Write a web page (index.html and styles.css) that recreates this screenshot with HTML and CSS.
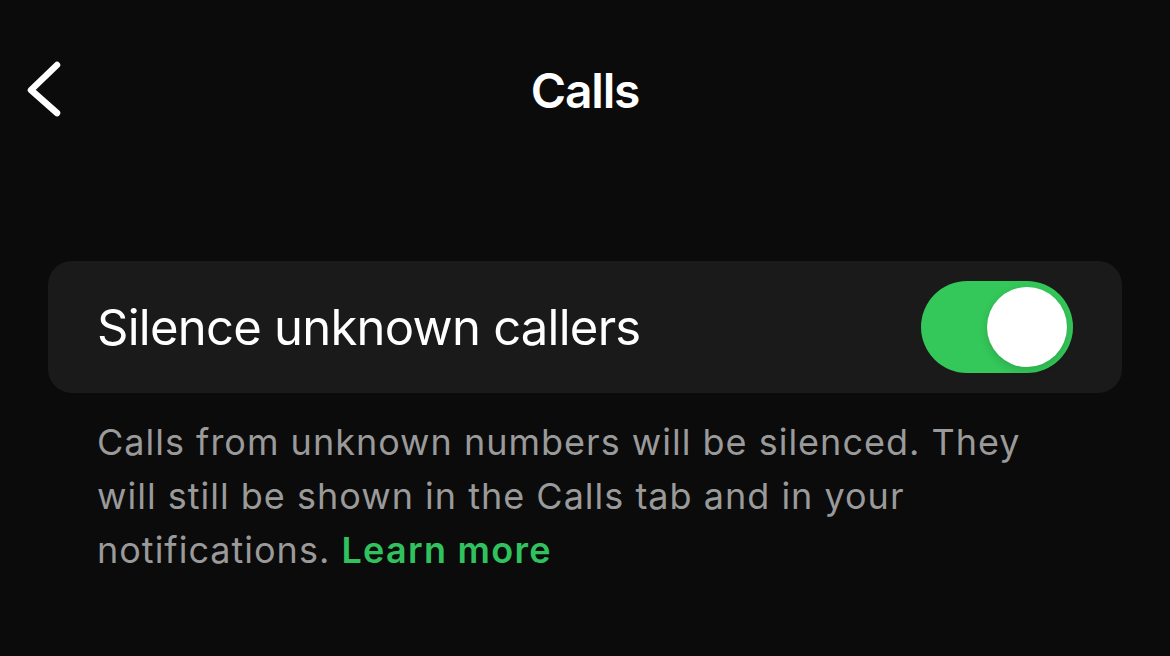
FILE: index.html
```html
<!DOCTYPE html>
<html lang="en">
<head>
<meta charset="utf-8">
<title>Calls</title>
<link rel="stylesheet" href="styles.css">
</head>
<body>
  <header class="nav">
    <button class="nav-back" aria-label="Back">
      <svg width="50" height="70" viewBox="0 0 50 70">
        <path d="M32 10 L6 35 L32 58" fill="none" stroke="#fff" stroke-width="6.5" stroke-linecap="round" stroke-linejoin="round"/>
      </svg>
    </button>
    <h1 class="nav-title">Calls</h1>
  </header>
  <main class="content">
    <section class="group">
      <div class="row">
        <span class="row-label">Silence unknown callers</span>
        <span class="switch is-on" role="switch" aria-checked="true"><span class="switch-knob"></span></span>
      </div>
    </section>
    <p class="footnote">Calls from unknown numbers will be silenced. They will still be shown in the Calls tab and in your notifications. <a class="footnote-link" href="#">Learn more</a></p>
  </main>
</body>
</html>
```
FILE: styles.css
```css
* { box-sizing: border-box; }

html, body {
  margin: 0;
  padding: 0;
  background: #0b0b0b;
  height: 100%;
}

body {
  font-family: Inter, "Noto Sans", sans-serif;
  color: #fff;
}

.nav {
  position: relative;
  height: 180px;
  display: flex;
  align-items: center;
  justify-content: center;
}

.nav-back {
  position: absolute;
  left: 25px;
  top: 55px;
  padding: 0;
  border: 0;
  background: none;
  display: flex;
}

.nav-title {
  margin: 0;
  font-size: 48px;
  font-weight: 600;
  letter-spacing: -1.2px;
}

.content {
  padding: 81px 48px 0;
}

.group {
  background: #1a1a1a;
  border-radius: 24px;
}

.row {
  height: 132px;
  padding: 0 49px;
  display: flex;
  align-items: center;
  justify-content: space-between;
}

.row-label {
  font-size: 49px;
  font-weight: 400;
  letter-spacing: -0.75px;
}

.switch {
  width: 152px;
  height: 92px;
  border-radius: 46px;
  background: #34c759;
  padding: 6px;
  display: flex;
  justify-content: flex-end;
}

.switch-knob {
  width: 80px;
  height: 80px;
  border-radius: 50%;
  background: #fff;
  box-shadow: 0 3px 8px rgba(0, 0, 0, 0.15);
}

.footnote {
  margin: 22px 0 0;
  padding: 0 49px;
  font-size: 36px;
  line-height: 54px;
  color: #9a9a9a;
  letter-spacing: 1px;
}

.footnote-link {
  color: #30c25e;
  font-weight: 600;
  letter-spacing: 1.3px;
  text-decoration: none;
}
```
